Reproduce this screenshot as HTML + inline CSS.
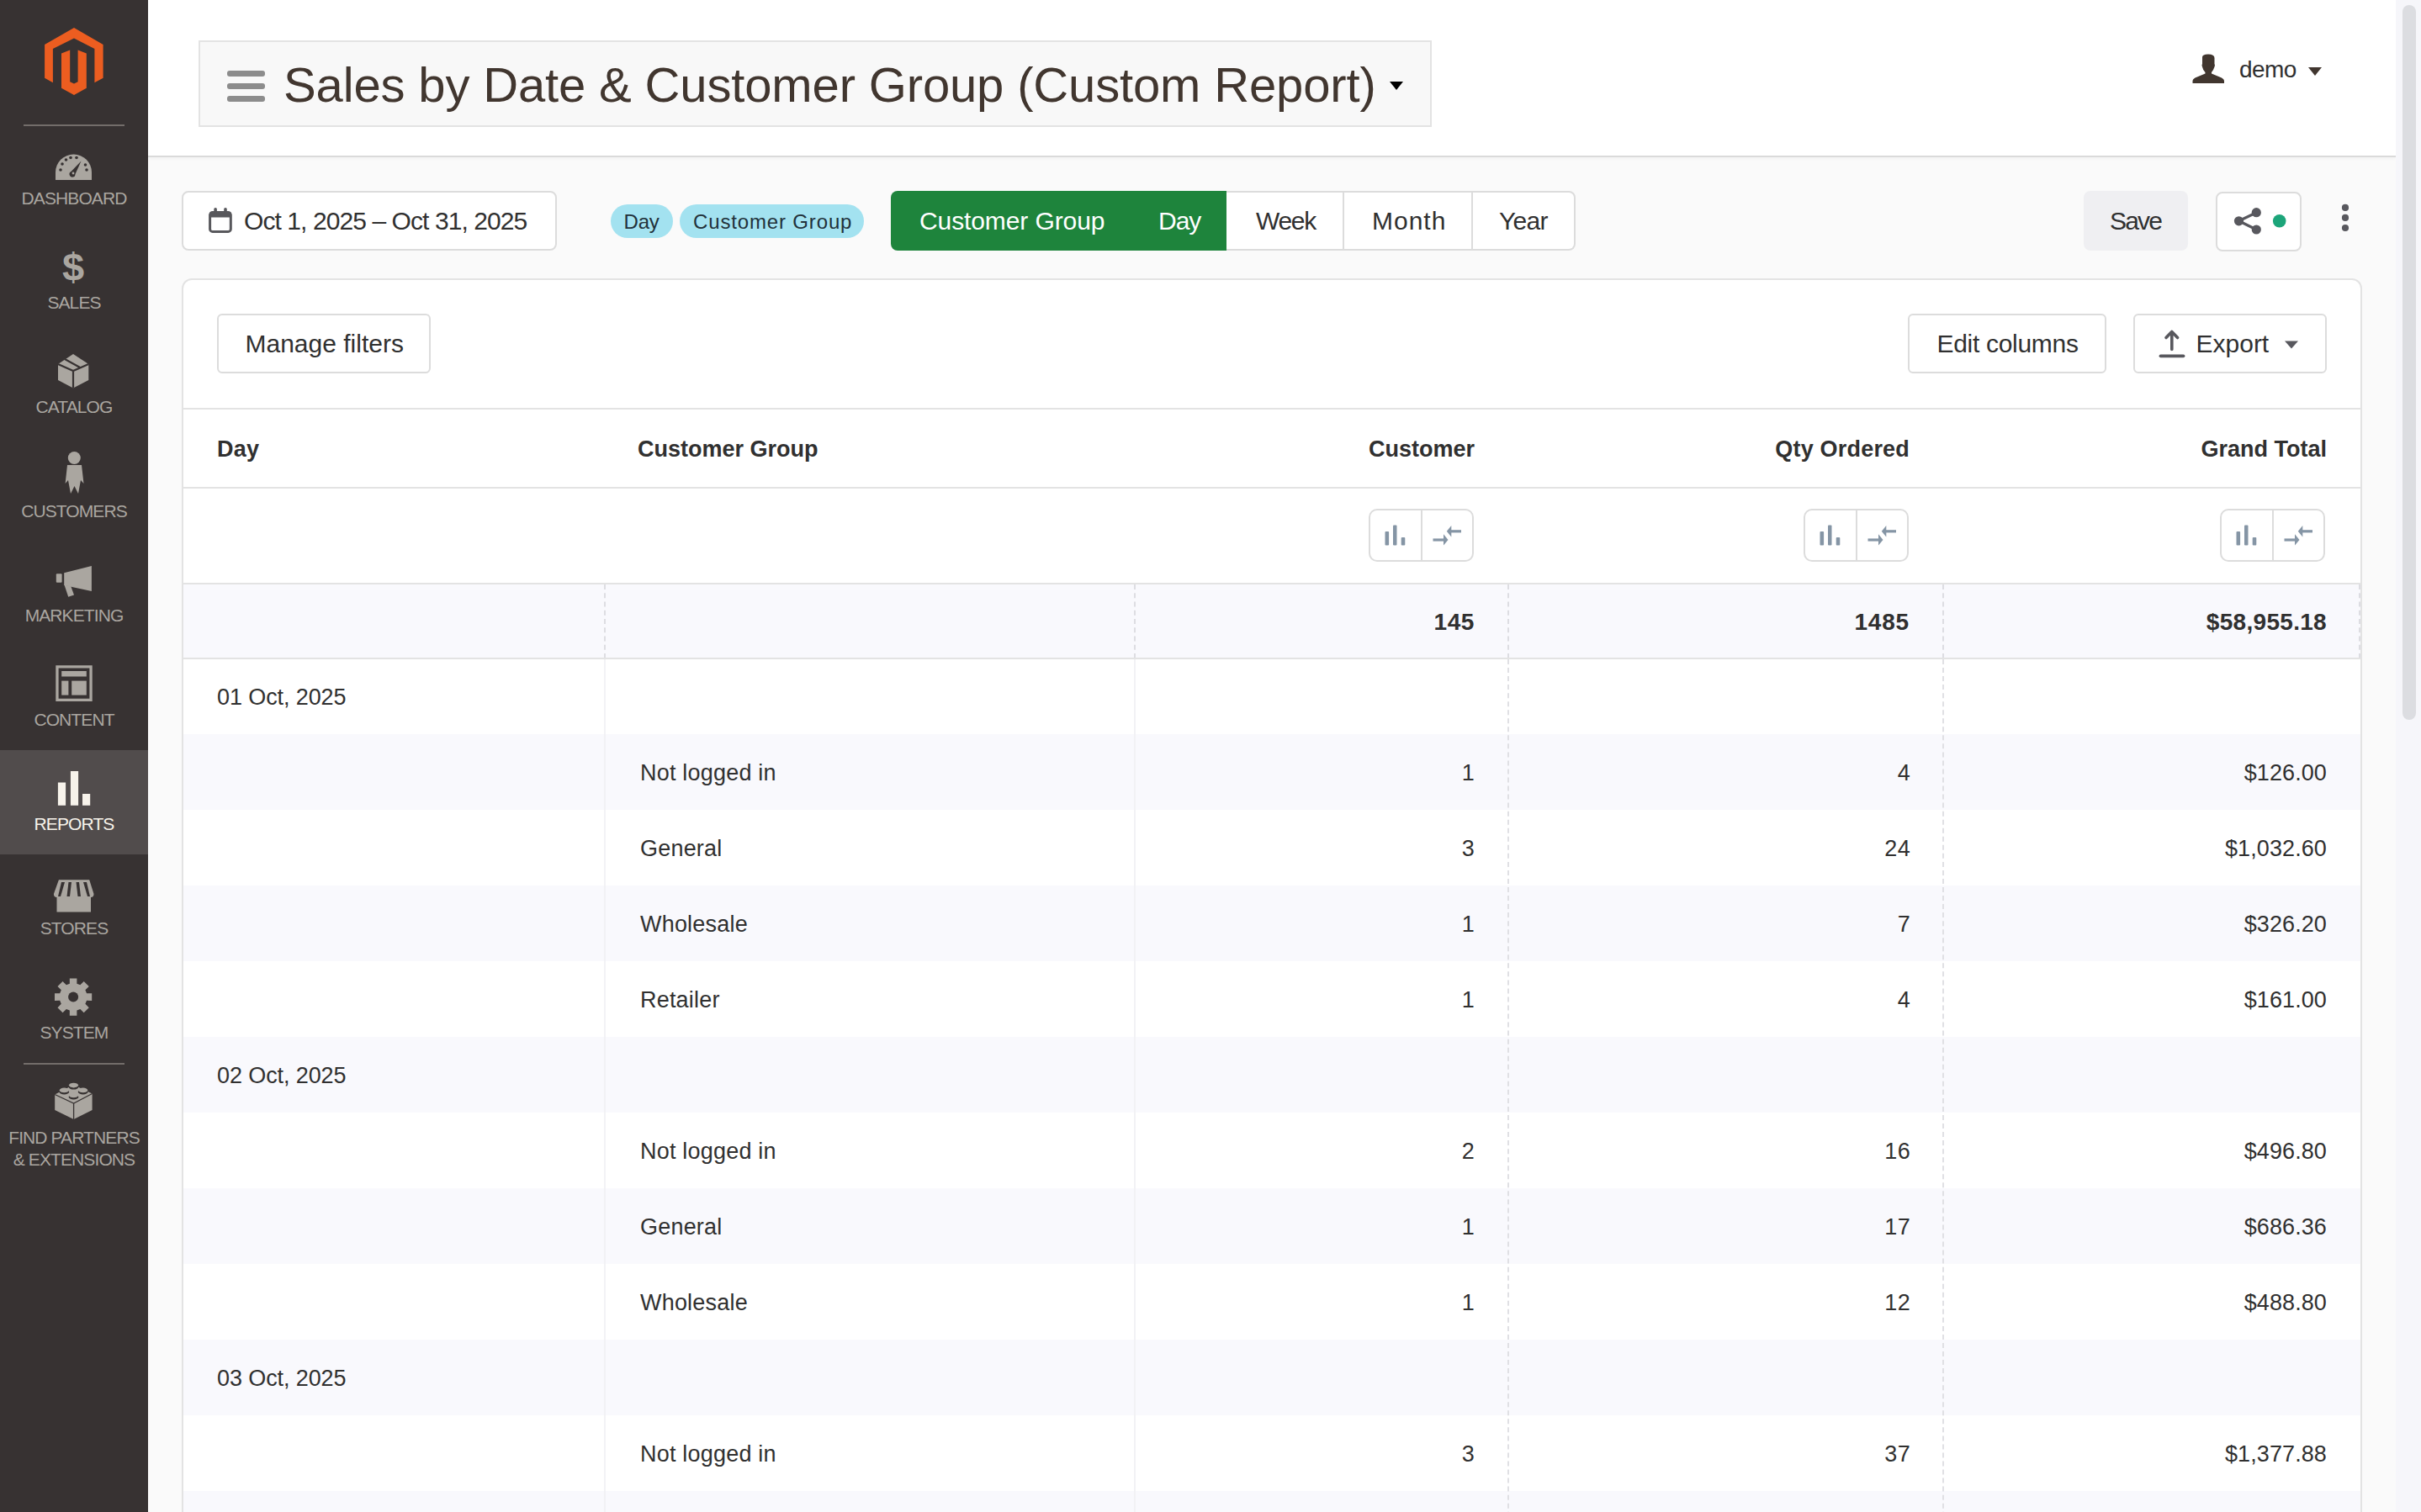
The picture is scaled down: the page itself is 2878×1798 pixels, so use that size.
<!DOCTYPE html>
<html><head><meta charset="utf-8">
<style>
*{box-sizing:border-box;margin:0;padding:0}
html,body{width:2878px;height:1798px;overflow:hidden;background:#fafafa;font-family:"Liberation Sans",sans-serif;color:#303030}
.a{position:absolute}
.t{position:absolute;line-height:1;white-space:nowrap}
#side{position:absolute;left:0;top:0;width:176px;height:1798px;background:#373232}
.sl{position:absolute;left:0;width:176px;text-align:center;font-size:21px;letter-spacing:-0.9px;line-height:1;color:#aaa6a0;white-space:nowrap}
.ic{position:absolute}
#hdr{position:absolute;left:176px;top:0;width:2672px;height:187px;background:#fff;border-bottom:2px solid #dadada;box-shadow:0 2px 3px rgba(0,0,0,0.03)}
#sb{position:absolute;left:2848px;top:0;width:30px;height:1798px;background:#f6f6fa}
#thumb{position:absolute;left:2856px;top:6px;width:16px;height:850px;background:#dcdde1;border-radius:8px}
@media (max-width:2000px){html{zoom:0.5}}
#root{position:absolute;left:0;top:0;width:2878px;height:1798px;overflow:hidden;background:#fafafa}
</style></head><body><div id="root">
<!-- SIDEBAR -->
<div id="side">
  <svg class="ic" style="left:0;top:0" width="176" height="160" viewBox="0 0 176 160">
    <path fill="#ec5d20" d="M88 33 L122.6 53 L122.6 92.7 L112.4 98.2 L112.4 58 L88 45.5 L62.9 58 L62.9 98.2 L53.1 92.7 L53.1 53 Z"/>
    <path fill="#ec5d20" d="M73 63.5 L83.2 59.4 L83.2 97.3 L88 99.6 L92.6 97.3 L92.6 59.4 L102.8 63.5 L102.8 104.7 L88 113 L73 104.7 Z"/>
    <rect x="28" y="148" width="120" height="2" fill="#736d6a"/>
  </svg>

  <div class="a" style="left:0;top:892px;width:176px;height:124px;background:#514c4c"></div>
  <svg class="ic" style="left:0;top:160px" width="176" height="1240" viewBox="0 160 176 1240" fill="#aaa6a0">
    <!-- dashboard gauge -->
    <path d="M66 214 L66 205 A21.5 21.5 0 0 1 109 205 L109 214 Z"/>
    <g fill="#373232">
      <circle cx="72" cy="202" r="1.8"/><circle cx="74" cy="195" r="1.8"/><circle cx="78.5" cy="190" r="1.8"/>
      <circle cx="84" cy="187.5" r="1.8"/><circle cx="91" cy="187.5" r="1.8"/><circle cx="101.5" cy="196" r="1.8"/><circle cx="103" cy="202" r="1.8"/>
      <path d="M96.5 191.5 L89.5 207 A3.5 3.5 0 1 1 84.5 204 Z"/>
    </g>
    <circle cx="87" cy="206" r="1.4" fill="#aaa6a0"/>
    <!-- sales $ -->
    <text x="87" y="333.5" font-family="Liberation Sans" font-weight="700" font-size="47" text-anchor="middle">$</text>
    <!-- catalog box -->
    <path d="M87 421 L105.3 433 L105.3 452 L87 461.5 L69 452 L69 433 Z"/>
    <path d="M69 433 L87 441 L105.3 433 M87 441 L87 461.5 M77 427 L96 437.5" stroke="#373232" stroke-width="2.2" fill="none"/>
    <!-- customers person -->
    <circle cx="88.3" cy="544.5" r="7.5"/>
    <path d="M80 553 L97 553 L99.5 575 L96 571 L93 587 L88.5 578 L84 587 L81 571 L77.6 575 Z"/>
    <!-- marketing megaphone -->
    <rect x="66.8" y="682.2" width="6.8" height="10.6" rx="1"/>
    <path d="M76.2 681.2 L108.9 672.9 L108.9 703 L76.2 695.9 Z"/><path d="M76.5 695.5 L84.3 697.2 L88 707.6 L81.2 709.8 Z"/>
    <!-- content -->
    <path fill-rule="evenodd" d="M66.3 791.3 H109.7 V834 H66.3 Z M69.6 794.6 V830.7 H106.4 V794.6 Z"/>
    <rect x="73.2" y="798" width="29.6" height="6.5"/>
    <rect x="73.2" y="809.6" width="8.2" height="17"/>
    <rect x="85.2" y="809.6" width="17.6" height="17"/>
    <!-- reports bars -->
    <g fill="#f7f3eb"><rect x="68.9" y="930.5" width="9.2" height="27.3"/><rect x="83.9" y="917" width="9.2" height="40.8"/><rect x="98" y="944" width="9.2" height="13.8"/></g>
    <!-- stores -->
    <path d="M69.9 1046.3 H106.2 L111.5 1063 Q111.5 1067 108 1067 V1084.4 H67.5 V1067 Q63.9 1067 63.9 1063 Z"/>
    <g fill="#373232"><path d="M73 1049 L77 1049 L72 1066 L69 1066 Z"/><path d="M81.5 1049 L85 1049 L83 1066 L79.5 1066 Z"/><path d="M90.5 1049 L94 1049 L96 1066 L92.5 1066 Z"/><path d="M99 1049 L103 1049 L107 1066 L104 1066 Z"/></g>
    <!-- system gear -->
    <path d="M82.83 1169.66 L82.81 1163.51 L91.39 1163.51 L91.37 1169.66 L95.35 1171.31 L99.68 1166.95 L105.75 1173.02 L101.39 1177.35 L103.04 1181.33 L109.19 1181.31 L109.19 1189.89 L103.04 1189.87 L101.39 1193.85 L105.75 1198.18 L99.68 1204.25 L95.35 1199.89 L91.37 1201.54 L91.39 1207.69 L82.81 1207.69 L82.83 1201.54 L78.85 1199.89 L74.52 1204.25 L68.45 1198.18 L72.81 1193.85 L71.16 1189.87 L65.01 1189.89 L65.01 1181.31 L71.16 1181.33 L72.81 1177.35 L68.45 1173.02 L74.52 1166.95 L78.85 1171.31 Z"/>
    <circle cx="87.1" cy="1185.6" r="6" fill="#373232"/>
    <!-- divider -->
    <rect x="28" y="1264" width="120" height="2" fill="#736d6a"/>
    <!-- lego -->
    <path d="M65.2 1301.5 L87.4 1290 L109.6 1300.5 L109.6 1320 L87.6 1331 L65.2 1320 Z"/>
    <path d="M65.2 1301.5 L87.6 1312 L109.6 1300.5 M87.6 1312 V1331" stroke="#373232" stroke-width="1.3" fill="none"/>
    <g>
      <ellipse cx="87.5" cy="1292.6" rx="5.8" ry="3" fill="#373232"/><ellipse cx="87.5" cy="1290.6" rx="5.6" ry="2.8"/>
      <ellipse cx="76.3" cy="1298.4" rx="5.8" ry="3" fill="#373232"/><ellipse cx="76.3" cy="1296.4" rx="5.6" ry="2.8"/>
      <ellipse cx="98.7" cy="1298.4" rx="5.8" ry="3" fill="#373232"/><ellipse cx="98.7" cy="1296.4" rx="5.6" ry="2.8"/>
      <ellipse cx="87.5" cy="1304.4" rx="5.8" ry="3" fill="#373232"/><ellipse cx="87.5" cy="1302.4" rx="5.6" ry="2.8"/>
    </g>
  </svg>
  <div class="sl" style="top:225px">DASHBOARD</div>
  <div class="sl" style="top:349px">SALES</div>
  <div class="sl" style="top:473px">CATALOG</div>
  <div class="sl" style="top:597px">CUSTOMERS</div>
  <div class="sl" style="top:721px">MARKETING</div>
  <div class="sl" style="top:845px">CONTENT</div>
  <div class="sl" style="top:969px;color:#f7f3eb">REPORTS</div>
  <div class="sl" style="top:1093px">STORES</div>
  <div class="sl" style="top:1217px">SYSTEM</div>
  <div class="sl" style="top:1342px">FIND PARTNERS</div>
  <div class="sl" style="top:1368px">&amp; EXTENSIONS</div>
</div>
<div id="hdr"></div>
<div class="a" style="left:236px;top:48px;width:1466px;height:103px;background:#f8f8f8;border:2px solid #e3e3e3"></div>
<div class="a" style="left:270px;top:84px;width:45px;height:7px;background:#8c8c8c;border-radius:3px"></div>
<div class="a" style="left:270px;top:98.5px;width:45px;height:7px;background:#8c8c8c;border-radius:3px"></div>
<div class="a" style="left:270px;top:113.5px;width:45px;height:7px;background:#8c8c8c;border-radius:3px"></div>
<div class="t" style="left:337px;top:72px;font-size:58px;color:#41362f;letter-spacing:-0.15px">Sales by Date &amp; Customer Group (Custom Report)</div>
<svg class="a" style="left:1652px;top:97px" width="16" height="10"><path d="M0 0 H16 L8 10 Z" fill="#000"/></svg>
<svg class="a" style="left:2606px;top:64px" width="39" height="35" viewBox="0 0 39 35"><path fill="#41362f" d="M12 4 Q12 0.5 19 0.5 Q26.5 0.5 26.5 5 L26.5 12 Q27.5 13 26.5 15.5 Q25 20 23 22 L23 23.5 L35 28.5 Q38 30 38 32 L38 35 L0.5 35 L0.5 32 Q0.5 30 3.5 28.5 L15.5 23.5 L15.5 22 Q13 20 12 15.5 Q11 13 12 12 Z"/></svg>
<div class="t" style="left:2662px;top:69px;font-size:28px;color:#303030;letter-spacing:-0.6px">demo</div>
<svg class="a" style="left:2744px;top:80px" width="16" height="10"><path d="M0 0 H16 L8 10 Z" fill="#41362f"/></svg>

<!-- TOOLBAR -->
<div class="a" style="left:216px;top:227px;width:446px;height:71px;background:#fff;border:2px solid #dcdcdc;border-radius:8px"></div>
<svg class="a" style="left:248px;top:247px" width="28" height="30" viewBox="248 247 28 30">
  <rect x="249.6" y="252.6" width="24.7" height="22.8" rx="3" fill="none" stroke="#58585c" stroke-width="3"/>
  <rect x="249" y="252" width="26" height="6.5" rx="2" fill="#58585c"/>
  <rect x="254.3" y="247" width="3.6" height="7" rx="1.8" fill="#58585c"/>
  <rect x="266.2" y="247" width="3.6" height="7" rx="1.8" fill="#58585c"/>
</svg>
<div class="t" style="left:290px;top:247.5px;font-size:30px;letter-spacing:-0.92px;color:#303030">Oct 1, 2025 – Oct 31, 2025</div>
<div class="a" style="left:726px;top:243px;width:74px;height:40px;background:#a3e2f0;border-radius:20px"></div>
<div class="a" style="left:808px;top:243px;width:219px;height:40px;background:#a3e2f0;border-radius:20px"></div>
<div class="t" style="left:741.5px;top:251.6px;font-size:24px;color:#22313a;letter-spacing:-0.2px">Day</div>
<div class="t" style="left:824px;top:251.6px;font-size:24px;color:#22313a;letter-spacing:0.85px">Customer Group</div>
<div class="a" style="left:1059px;top:227px;width:400px;height:71px;background:#1e843c;border-radius:8px 0 0 8px"></div>
<div class="a" style="left:1458px;top:227px;width:415px;height:71px;background:#fff;border:2px solid #dcdcdc;border-left:none;border-radius:0 8px 8px 0"></div>
<div class="a" style="left:1596px;top:229px;width:2px;height:67px;background:#dcdcdc"></div>
<div class="a" style="left:1749px;top:229px;width:2px;height:67px;background:#dcdcdc"></div>
<div class="t" style="left:1093px;top:248px;font-size:30px;color:#fff;letter-spacing:-0.1px">Customer Group</div>
<div class="t" style="left:1377px;top:248px;font-size:30px;color:#fff;letter-spacing:-1px">Day</div>
<div class="t" style="left:1493px;top:248px;font-size:30px;color:#303030;letter-spacing:-1.3px">Week</div>
<div class="t" style="left:1631px;top:248px;font-size:30px;color:#303030;letter-spacing:1px">Month</div>
<div class="t" style="left:1782px;top:248px;font-size:30px;color:#303030;letter-spacing:-0.7px">Year</div>
<div class="a" style="left:2477px;top:227px;width:124px;height:71px;background:#efeff2;border-radius:8px"></div>
<div class="t" style="left:2508px;top:248px;font-size:30px;color:#303030;letter-spacing:-1.8px">Save</div>
<div class="a" style="left:2634px;top:228px;width:102px;height:71px;background:#fff;border:2px solid #dcdcdc;border-radius:8px"></div>
<svg class="a" style="left:2650px;top:244px" width="70" height="40" viewBox="2650 244 70 40">
  <path d="M2661.5 262.8 L2682.3 252.7 M2661.5 262.8 L2682.3 273" stroke="#58585e" stroke-width="3.2"/>
  <circle cx="2661.5" cy="262.8" r="5.6" fill="#58585e"/><circle cx="2682.3" cy="252.7" r="5.6" fill="#58585e"/><circle cx="2682.3" cy="273" r="5.6" fill="#58585e"/>
  <circle cx="2709.7" cy="262.8" r="7.8" fill="#1ca57a"/>
</svg>
<svg class="a" style="left:2780px;top:240px" width="16" height="40" viewBox="2780 240 16 40">
  <circle cx="2788" cy="246.9" r="4.1" fill="#58585e"/><circle cx="2788" cy="258.9" r="4.1" fill="#58585e"/><circle cx="2788" cy="271" r="4.1" fill="#58585e"/>
</svg>
<!-- CARD -->
<div class="a" style="left:216px;top:331px;width:2592px;height:1600px;background:#fff;border:2px solid #e3e3e3;border-radius:12px"></div>
<div class="a" style="left:258px;top:373px;width:254px;height:71px;background:#fff;border:2px solid #dcdcdc;border-radius:6px"></div>
<div class="t" style="left:291.5px;top:394px;font-size:30px;color:#303030">Manage filters</div>
<div class="a" style="left:2268px;top:373px;width:236px;height:71px;background:#fff;border:2px solid #dcdcdc;border-radius:6px"></div>
<div class="t" style="left:2302.5px;top:394px;font-size:30px;color:#303030;letter-spacing:-0.3px">Edit columns</div>
<div class="a" style="left:2536px;top:373px;width:230px;height:71px;background:#fff;border:2px solid #dcdcdc;border-radius:6px"></div>
<svg class="a" style="left:2560px;top:388px" width="45" height="45" viewBox="2560 388 45 45">
  <path d="M2581.8 415.5 V395 M2575 401.5 L2581.8 394.5 L2588.6 401.5" stroke="#58585e" stroke-width="3.6" stroke-linecap="round" stroke-linejoin="round" fill="none"/>
  <path d="M2568.5 423.3 H2595.5" stroke="#58585e" stroke-width="3.8" stroke-linecap="round"/>
</svg>
<div class="t" style="left:2610.5px;top:394px;font-size:30px;color:#303030">Export</div>
<svg class="a" style="left:2716px;top:405px" width="16" height="10"><path d="M0 0.5 H16 L8 9.5 Z" fill="#58585e"/></svg>
<!-- TABLE -->
<div class="a" style="left:218px;top:485px;width:2588px;height:2px;background:#e3e3e3"></div>
<div class="t" style="left:258px;top:520.5px;font-size:27px;font-weight:700;color:#303030;letter-spacing:0.3px">Day</div>
<div class="t" style="left:758px;top:520.5px;font-size:27px;font-weight:700;color:#303030">Customer Group</div>
<div class="t" style="right:1125px;top:520.5px;font-size:27px;font-weight:700;color:#303030;letter-spacing:0px;padding-right:0">Customer</div>
<div class="t" style="right:608px;top:520.5px;font-size:27px;font-weight:700;color:#303030;letter-spacing:0.2px;padding-right:0">Qty Ordered</div>
<div class="t" style="right:112px;top:520.5px;font-size:27px;font-weight:700;color:#303030;letter-spacing:0px;padding-right:0">Grand Total</div>
<div class="a" style="left:218px;top:579px;width:2588px;height:2px;background:#e3e3e3"></div>
<div class="a" style="left:1627px;top:605px;width:125px;height:63px;border:2px solid #dcdcdc;border-radius:10px;background:#fff"></div>
<div class="a" style="left:1689px;top:607px;width:2px;height:59px;background:#dcdcdc"></div>
<svg class="a" style="left:1627px;top:605px" width="125" height="63" viewBox="0 0 125 63" fill="#8595a5">
<rect x="19.5" y="27" width="4.6" height="16.6" rx="1"/><rect x="29" y="19.5" width="4.5" height="24.1" rx="1"/><rect x="38.7" y="34" width="4.6" height="9.6" rx="1"/>
<path d="M76.5 37 H90" stroke="#8595a5" stroke-width="3.2"/><path d="M89 30.2 L94.5 37 L89 43.5 Z"/>
<path d="M97.5 26.8 H110" stroke="#8595a5" stroke-width="3.2"/><path d="M98.3 20 L92.8 26.8 L98.3 33.5 Z"/>
</svg>
<div class="a" style="left:2144px;top:605px;width:125px;height:63px;border:2px solid #dcdcdc;border-radius:10px;background:#fff"></div>
<div class="a" style="left:2206px;top:607px;width:2px;height:59px;background:#dcdcdc"></div>
<svg class="a" style="left:2144px;top:605px" width="125" height="63" viewBox="0 0 125 63" fill="#8595a5">
<rect x="19.5" y="27" width="4.6" height="16.6" rx="1"/><rect x="29" y="19.5" width="4.5" height="24.1" rx="1"/><rect x="38.7" y="34" width="4.6" height="9.6" rx="1"/>
<path d="M76.5 37 H90" stroke="#8595a5" stroke-width="3.2"/><path d="M89 30.2 L94.5 37 L89 43.5 Z"/>
<path d="M97.5 26.8 H110" stroke="#8595a5" stroke-width="3.2"/><path d="M98.3 20 L92.8 26.8 L98.3 33.5 Z"/>
</svg>
<div class="a" style="left:2639px;top:605px;width:125px;height:63px;border:2px solid #dcdcdc;border-radius:10px;background:#fff"></div>
<div class="a" style="left:2701px;top:607px;width:2px;height:59px;background:#dcdcdc"></div>
<svg class="a" style="left:2639px;top:605px" width="125" height="63" viewBox="0 0 125 63" fill="#8595a5">
<rect x="19.5" y="27" width="4.6" height="16.6" rx="1"/><rect x="29" y="19.5" width="4.5" height="24.1" rx="1"/><rect x="38.7" y="34" width="4.6" height="9.6" rx="1"/>
<path d="M76.5 37 H90" stroke="#8595a5" stroke-width="3.2"/><path d="M89 30.2 L94.5 37 L89 43.5 Z"/>
<path d="M97.5 26.8 H110" stroke="#8595a5" stroke-width="3.2"/><path d="M98.3 20 L92.8 26.8 L98.3 33.5 Z"/>
</svg>
<div class="a" style="left:218px;top:693px;width:2588px;height:2px;background:#e3e3e3"></div>
<div class="a" style="left:218px;top:695px;width:2588px;height:88px;background:#f9f9fd"></div>
<div class="a" style="left:718px;top:695px;width:0;height:88px;border-left:2px dashed #dddde2"></div>
<div class="a" style="left:1348px;top:695px;width:0;height:88px;border-left:2px dashed #dddde2"></div>
<div class="a" style="left:1792px;top:695px;width:0;height:88px;border-left:2px dashed #dddde2"></div>
<div class="a" style="left:2309px;top:695px;width:0;height:88px;border-left:2px dashed #dddde2"></div>
<div class="a" style="left:2804px;top:695px;width:0;height:88px;border-left:2px dashed #dddde2"></div>
<div class="t" style="right:1125px;top:725.7px;font-size:28px;font-weight:700;color:#303030;letter-spacing:0.6px;padding-right:0">145</div>
<div class="t" style="right:608px;top:725.7px;font-size:28px;font-weight:700;color:#303030;letter-spacing:0.8px;padding-right:0">1485</div>
<div class="t" style="right:112px;top:725.7px;font-size:28px;font-weight:700;color:#303030;letter-spacing:0.3px;padding-right:0">$58,955.18</div>

<div class="a" style="left:218px;top:783px;width:2588px;height:90px;background:#fff"></div>
<div class="a" style="left:218px;top:873px;width:2588px;height:90px;background:#f9f9fd"></div>
<div class="a" style="left:218px;top:963px;width:2588px;height:90px;background:#fff"></div>
<div class="a" style="left:218px;top:1053px;width:2588px;height:90px;background:#f9f9fd"></div>
<div class="a" style="left:218px;top:1143px;width:2588px;height:90px;background:#fff"></div>
<div class="a" style="left:218px;top:1233px;width:2588px;height:90px;background:#f9f9fd"></div>
<div class="a" style="left:218px;top:1323px;width:2588px;height:90px;background:#fff"></div>
<div class="a" style="left:218px;top:1413px;width:2588px;height:90px;background:#f9f9fd"></div>
<div class="a" style="left:218px;top:1503px;width:2588px;height:90px;background:#fff"></div>
<div class="a" style="left:218px;top:1593px;width:2588px;height:90px;background:#f9f9fd"></div>
<div class="a" style="left:218px;top:1683px;width:2588px;height:90px;background:#fff"></div>
<div class="a" style="left:218px;top:1773px;width:2588px;height:90px;background:#f9f9fd"></div>
<div class="a" style="left:218px;top:782px;width:2588px;height:2px;background:#e3e3e3"></div>
<div class="a" style="left:718px;top:784px;width:2px;height:1100px;background:#f2f2f5"></div>
<div class="a" style="left:1348px;top:784px;width:2px;height:1100px;background:#f2f2f5"></div>
<div class="a" style="left:1792px;top:784px;width:0;height:1100px;border-left:2px dashed #e0e0e4"></div>
<div class="a" style="left:2309px;top:784px;width:0;height:1100px;border-left:2px dashed #e0e0e4"></div>
<div class="t" style="left:258px;top:816.0px;font-size:27px;color:#303030;letter-spacing:-0.1px">01 Oct, 2025</div>
<div class="t" style="left:761px;top:906.0px;font-size:27px;color:#303030;letter-spacing:0.2px">Not logged in</div>
<div class="t" style="right:1125px;top:906.0px;font-size:27px;font-weight:400;color:#303030;letter-spacing:0.3px;padding-right:0">1</div>
<div class="t" style="right:607px;top:906.0px;font-size:27px;font-weight:400;color:#303030;letter-spacing:0.3px;padding-right:0">4</div>
<div class="t" style="right:112px;top:906.0px;font-size:27px;font-weight:400;color:#303030;letter-spacing:0.1px;padding-right:0">$126.00</div>
<div class="t" style="left:761px;top:996.0px;font-size:27px;color:#303030;letter-spacing:0.2px">General</div>
<div class="t" style="right:1125px;top:996.0px;font-size:27px;font-weight:400;color:#303030;letter-spacing:0.3px;padding-right:0">3</div>
<div class="t" style="right:607px;top:996.0px;font-size:27px;font-weight:400;color:#303030;letter-spacing:0.3px;padding-right:0">24</div>
<div class="t" style="right:112px;top:996.0px;font-size:27px;font-weight:400;color:#303030;letter-spacing:0.1px;padding-right:0">$1,032.60</div>
<div class="t" style="left:761px;top:1086.0px;font-size:27px;color:#303030;letter-spacing:0.2px">Wholesale</div>
<div class="t" style="right:1125px;top:1086.0px;font-size:27px;font-weight:400;color:#303030;letter-spacing:0.3px;padding-right:0">1</div>
<div class="t" style="right:607px;top:1086.0px;font-size:27px;font-weight:400;color:#303030;letter-spacing:0.3px;padding-right:0">7</div>
<div class="t" style="right:112px;top:1086.0px;font-size:27px;font-weight:400;color:#303030;letter-spacing:0.1px;padding-right:0">$326.20</div>
<div class="t" style="left:761px;top:1176.0px;font-size:27px;color:#303030;letter-spacing:0.2px">Retailer</div>
<div class="t" style="right:1125px;top:1176.0px;font-size:27px;font-weight:400;color:#303030;letter-spacing:0.3px;padding-right:0">1</div>
<div class="t" style="right:607px;top:1176.0px;font-size:27px;font-weight:400;color:#303030;letter-spacing:0.3px;padding-right:0">4</div>
<div class="t" style="right:112px;top:1176.0px;font-size:27px;font-weight:400;color:#303030;letter-spacing:0.1px;padding-right:0">$161.00</div>
<div class="t" style="left:258px;top:1266.0px;font-size:27px;color:#303030;letter-spacing:-0.1px">02 Oct, 2025</div>
<div class="t" style="left:761px;top:1356.0px;font-size:27px;color:#303030;letter-spacing:0.2px">Not logged in</div>
<div class="t" style="right:1125px;top:1356.0px;font-size:27px;font-weight:400;color:#303030;letter-spacing:0.3px;padding-right:0">2</div>
<div class="t" style="right:607px;top:1356.0px;font-size:27px;font-weight:400;color:#303030;letter-spacing:0.3px;padding-right:0">16</div>
<div class="t" style="right:112px;top:1356.0px;font-size:27px;font-weight:400;color:#303030;letter-spacing:0.1px;padding-right:0">$496.80</div>
<div class="t" style="left:761px;top:1446.0px;font-size:27px;color:#303030;letter-spacing:0.2px">General</div>
<div class="t" style="right:1125px;top:1446.0px;font-size:27px;font-weight:400;color:#303030;letter-spacing:0.3px;padding-right:0">1</div>
<div class="t" style="right:607px;top:1446.0px;font-size:27px;font-weight:400;color:#303030;letter-spacing:0.3px;padding-right:0">17</div>
<div class="t" style="right:112px;top:1446.0px;font-size:27px;font-weight:400;color:#303030;letter-spacing:0.1px;padding-right:0">$686.36</div>
<div class="t" style="left:761px;top:1536.0px;font-size:27px;color:#303030;letter-spacing:0.2px">Wholesale</div>
<div class="t" style="right:1125px;top:1536.0px;font-size:27px;font-weight:400;color:#303030;letter-spacing:0.3px;padding-right:0">1</div>
<div class="t" style="right:607px;top:1536.0px;font-size:27px;font-weight:400;color:#303030;letter-spacing:0.3px;padding-right:0">12</div>
<div class="t" style="right:112px;top:1536.0px;font-size:27px;font-weight:400;color:#303030;letter-spacing:0.1px;padding-right:0">$488.80</div>
<div class="t" style="left:258px;top:1626.0px;font-size:27px;color:#303030;letter-spacing:-0.1px">03 Oct, 2025</div>
<div class="t" style="left:761px;top:1716.0px;font-size:27px;color:#303030;letter-spacing:0.2px">Not logged in</div>
<div class="t" style="right:1125px;top:1716.0px;font-size:27px;font-weight:400;color:#303030;letter-spacing:0.3px;padding-right:0">3</div>
<div class="t" style="right:607px;top:1716.0px;font-size:27px;font-weight:400;color:#303030;letter-spacing:0.3px;padding-right:0">37</div>
<div class="t" style="right:112px;top:1716.0px;font-size:27px;font-weight:400;color:#303030;letter-spacing:0.1px;padding-right:0">$1,377.88</div>
<div id="sb"></div><div id="thumb"></div>
</div></body></html>
